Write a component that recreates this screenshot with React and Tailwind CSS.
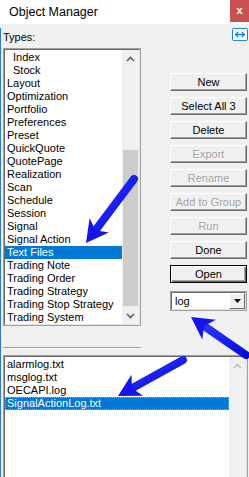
import React from "react";

const types = [
  { name: "Index", indent: true },
  { name: "Stock", indent: true },
  { name: "Layout" },
  { name: "Optimization" },
  { name: "Portfolio" },
  { name: "Preferences" },
  { name: "Preset" },
  { name: "QuickQuote" },
  { name: "QuotePage" },
  { name: "Realization" },
  { name: "Scan" },
  { name: "Schedule" },
  { name: "Session" },
  { name: "Signal" },
  { name: "Signal Action" },
  { name: "Text Files", selected: true },
  { name: "Trading Note" },
  { name: "Trading Order" },
  { name: "Trading Strategy" },
  { name: "Trading Stop Strategy" },
  { name: "Trading System" },
];

const files = ["alarmlog.txt", "msglog.txt", "OECAPI.log", "SignalActionLog.txt"];

const buttons = [
  { label: "New" },
  { label: "Select All 3" },
  { label: "Delete" },
  { label: "Export", disabled: true },
  { label: "Rename", disabled: true },
  { label: "Add to Group", disabled: true },
  { label: "Run", disabled: true },
  { label: "Done" },
  { label: "Open", isDefault: true },
];

const Chevron = ({ down, color = "#606060" }) => (
  <svg width="9" height="6" viewBox="0 0 9 6">
    <polyline
      points={down ? "1,1 4.5,4.5 8,1" : "1,5 4.5,1.5 8,5"}
      fill="none"
      stroke={color}
      strokeWidth="1.6"
    />
  </svg>
);

// sunken 3D frame used by the list boxes
const Sunken = ({ className, children }) => (
  <div className={`border border-[#a0a0a0] ${className}`}>
    <div className="h-full flex bg-white border border-t-[#696969] border-l-[#696969] border-r-[#e3e3e3] border-b-[#e3e3e3]">
      {children}
    </div>
  </div>
);

const Arrow = ({ x1, y1, x2, y2 }) => {
  const dx = x2 - x1;
  const dy = y2 - y1;
  const len = Math.hypot(dx, dy);
  const ux = dx / len;
  const uy = dy / len;
  const nx = -uy;
  const ny = ux;
  const L = 22;
  const W = 12;
  const notch = 6;
  const bx = x2 - ux * L;
  const by = y2 - uy * L;
  const mx = x2 - ux * (L - notch);
  const my = y2 - uy * (L - notch);
  return (
    <g>
      <line
        x1={x1}
        y1={y1}
        x2={mx}
        y2={my}
        stroke="url(#arrowBlue)"
        strokeWidth="8"
        strokeLinecap="round"
      />
      <polygon
        points={`${x2},${y2} ${bx + nx * W},${by + ny * W} ${mx},${my} ${bx - nx * W},${by - ny * W}`}
        fill="#1515e8"
      />
    </g>
  );
};

const Button = ({ label, disabled, isDefault }) => {
  const frame = isDefault
    ? "border border-black shadow-[inset_1px_1px_0_#fff,inset_-1px_-1px_0_#696969,inset_-2px_-2px_0_#a0a0a0]"
    : "border border-t-white border-l-white border-r-[#696969] border-b-[#696969] shadow-[inset_-1px_-1px_0_#a0a0a0]";
  return (
    <div
      className={`h-[18px] bg-[#f0f0f0] flex items-center justify-center ${frame} ${
        disabled ? "text-[#a0a0a0] [text-shadow:1px_1px_0_#fff]" : "text-black"
      }`}
    >
      {label}
    </div>
  );
};

export default function App() {
  return (
    <div className="relative w-[249px] h-[477px] overflow-hidden bg-[#f0f0f0] font-['Liberation_Sans',Arial,sans-serif] text-[11px] leading-[13px] text-black">
      {/* Title bar */}
      <div className="h-[24px] bg-white flex items-start justify-between">
        <span className="pl-[9px] pt-[5px] text-[12.5px] leading-[14px]">
          Object Manager
        </span>
        <div className="w-[19px] h-[22px] bg-[#c75050] text-white flex items-center justify-center text-[11px] font-bold leading-none pb-[2px]">
          x
        </div>
      </div>

      <div className="h-[453px] border-l border-[#2b7bd0] pl-[2px]">
        {/* Types label row */}
        <div className="mt-[4px] h-[16px] flex items-start justify-between pr-[1px]">
          <span className="pt-[3px]">Types:</span>
          <svg width="16" height="13" viewBox="0 0 16 13">
            <rect x="0.5" y="0.5" width="15" height="12" rx="1.5" fill="#fff" stroke="#1a84e0" />
            <line x1="4" y1="6.5" x2="12" y2="6.5" stroke="#1a84e0" strokeWidth="1.4" />
            <polyline points="6.2,4 3.6,6.5 6.2,9" fill="none" stroke="#1a84e0" strokeWidth="1.4" />
            <polyline points="9.8,4 12.4,6.5 9.8,9" fill="none" stroke="#1a84e0" strokeWidth="1.4" />
          </svg>
        </div>

        {/* Types list + buttons */}
        <div className="mt-[4px] flex">
          <Sunken className="w-[138px] h-[278px]">
            <div className="w-[117px] pt-[1px]">
              {types.map((t) => (
                <div
                  key={t.name}
                  className={`h-[13px] whitespace-nowrap ${t.indent ? "pl-[8px]" : "pl-[2px]"} ${
                    t.selected ? "bg-[#0078d7] text-white" : ""
                  }`}
                >
                  {t.name}
                </div>
              ))}
            </div>
            <div className="w-[17px] bg-[#f0f0f0] flex flex-col">
              <div className="h-[17px] flex items-center justify-center">
                <Chevron />
              </div>
              <div className="h-[83px]" />
              <div className="h-[156px] mx-[1px] bg-[#cdcdcd]" />
              <div className="flex-1" />
              <div className="h-[17px] flex items-center justify-center">
                <Chevron down />
              </div>
            </div>
          </Sunken>

          <div className="ml-[29px] w-[77px] pt-[25px] flex flex-col gap-[6px]">
            {buttons.map((b) => (
              <Button key={b.label} {...b} />
            ))}
            <div className="mt-[2px] h-[20px] border border-[#a0a0a0]">
              <div className="h-full flex bg-white border border-t-[#696969] border-l-[#696969] border-r-[#e3e3e3] border-b-[#e3e3e3]">
                <span className="flex-1 pl-[3px] pt-[2px]">log</span>
                <div className="w-[16px] bg-[#f0f0f0] flex items-center justify-center border border-t-white border-l-white border-r-[#696969] border-b-[#696969]">
                  <svg width="7" height="4" viewBox="0 0 7 4">
                    <polygon points="0,0 7,0 3.5,4" fill="#000" />
                  </svg>
                </div>
              </div>
            </div>
          </div>
        </div>

        {/* Separator */}
        <div className="mt-[21px] w-[138px] border-t border-t-[#a0a0a0] border-b border-b-white" />

        {/* Files list */}
        <Sunken className="mt-[6px] w-[245px] h-[130px]">
          <div className="flex-1 pt-[1px]">
            {files.map((f, i) => (
              <div
                key={f}
                className={`h-[13px] pl-[2px] whitespace-nowrap ${
                  i === files.length - 1
                    ? "bg-[#0078d7] text-white outline-1 outline-dotted outline-[#e9a23b] -outline-offset-1"
                    : ""
                }`}
              >
                {f}
              </div>
            ))}
          </div>
          <div className="w-[17px] bg-[#f0f0f0] flex flex-col">
            <div className="h-[17px] flex items-center justify-center">
              <Chevron color="#c0c0c0" />
            </div>
          </div>
        </Sunken>
      </div>

      {/* Annotation arrows */}
      <svg
        className="absolute inset-0 pointer-events-none"
        width="249"
        height="477"
        viewBox="0 0 249 477"
      >
        <defs>
          <linearGradient id="arrowBlue" x1="0" y1="0" x2="1" y2="1">
            <stop offset="0" stopColor="#2a36ff" />
            <stop offset="1" stopColor="#0a0ad8" />
          </linearGradient>
        </defs>
        <Arrow x1={134} y1={179} x2={86} y2={243} />
        <Arrow x1={246} y1={355} x2={191} y2={317} />
        <Arrow x1={183} y1={360} x2={118} y2={396} />
      </svg>
    </div>
  );
}
